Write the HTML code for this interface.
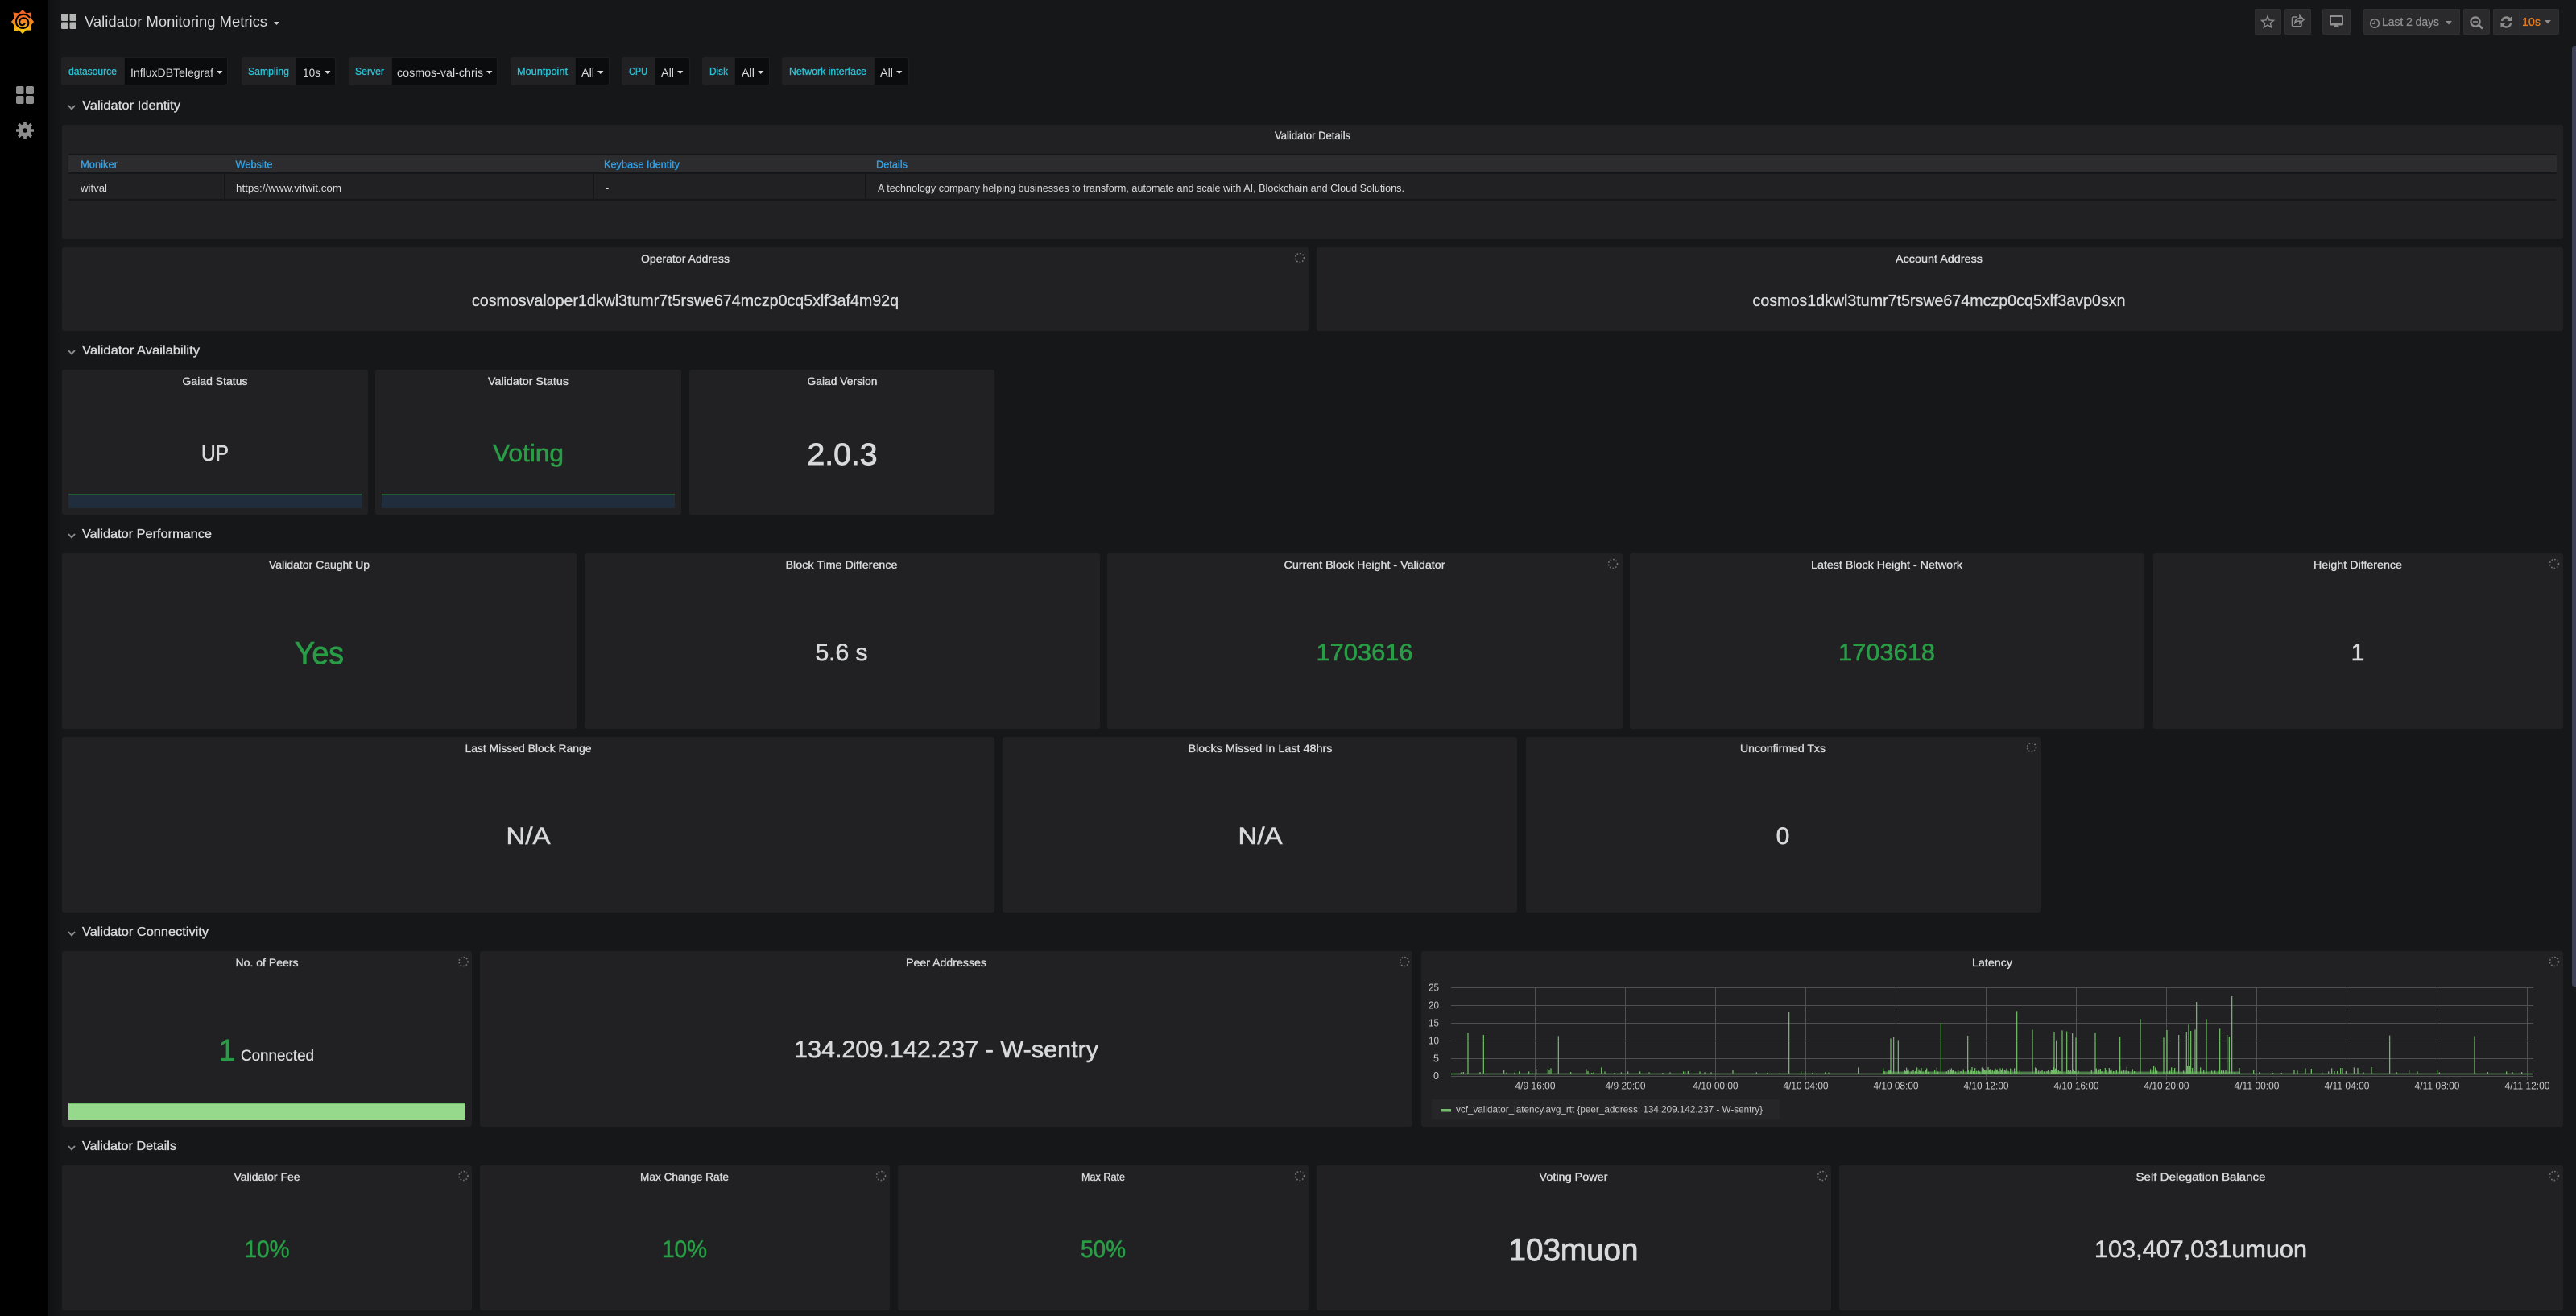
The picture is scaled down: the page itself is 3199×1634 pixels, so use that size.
<!DOCTYPE html>
<html lang="en"><head><meta charset="utf-8"><title>Validator Monitoring Metrics</title>
<style>
html,body{margin:0;padding:0;width:3199px;height:1634px;overflow:hidden;background:#161719}
.a{position:absolute}
.side{left:0;top:0;width:60px;height:1634px;background:#000}
.shade{left:60px;top:0;width:17px;height:1634px;background:linear-gradient(90deg,#101113,#161719)}
.p{position:absolute;background:#212124;border-radius:3px}
.lab{position:absolute;top:71px;height:35px;background:#212124;border-radius:3px 0 0 3px}
.val{position:absolute;top:71px;height:35px;background:#0b0c0e;border:1px solid #1c1d1f;box-sizing:border-box;border-radius:0 3px 3px 0}
.b{position:absolute;top:11px;height:32px;background:#2a2a2c;border:1px solid #2f2f32;box-sizing:border-box;border-radius:2px}
.d{position:absolute;background:#141619}
.th{position:absolute;left:85px;top:193px;width:3090px;height:21px;background:#2c2c2f}
svg{position:absolute;left:0;top:0}
text{font-family:"Liberation Sans",sans-serif}
.t{font-size:13.5px;fill:#d8d9da;stroke:#d8d9da;stroke-width:.35px;text-anchor:middle}
.s{font-size:16px;fill:#d8d9da;stroke:#d8d9da;stroke-width:.35px}
.l{font-size:12.5px;fill:#2ac1d2;stroke:#2ac1d2;stroke-width:.3px}
.v{font-size:14px;fill:#d8d9da}
.h{font-size:12.5px;fill:#33a2e5;stroke:#33a2e5;stroke-width:.3px}
.c{font-size:13px;fill:#d8d9da}
.g{fill:#299c46;stroke:#299c46;stroke-width:.6px;text-anchor:middle}
.w{fill:#d8d9da;stroke:#d8d9da;stroke-width:.6px;text-anchor:middle}
.x{font-size:12.5px;fill:#c8c8c8;text-anchor:middle}
.y{font-size:12.5px;fill:#c8c8c8;text-anchor:end}
.sp{fill:none;stroke:#777;stroke-width:1.6;stroke-dasharray:1.6 2.1}
</style></head><body>
<div class="a side"></div><div class="a shade"></div>

<div class="lab" style="left:76px;width:78px"></div><div class="val" style="left:154px;width:129px"></div>
<div class="lab" style="left:300px;width:67px"></div><div class="val" style="left:367px;width:50px"></div>
<div class="lab" style="left:433px;width:53px"></div><div class="val" style="left:486px;width:132px"></div>
<div class="lab" style="left:634px;width:80px"></div><div class="val" style="left:714px;width:43px"></div>
<div class="lab" style="left:772px;width:41px"></div><div class="val" style="left:813px;width:44px"></div>
<div class="lab" style="left:872px;width:40px"></div><div class="val" style="left:912px;width:44px"></div>
<div class="lab" style="left:971px;width:114px"></div><div class="val" style="left:1085px;width:44px"></div>

<div class="b" style="left:2800px;width:33px"></div>
<div class="b" style="left:2837px;width:33px"></div>
<div class="b" style="left:2884px;width:35px"></div>
<div class="b" style="left:2935px;width:120px"></div>
<div class="b" style="left:3059px;width:33px"></div>
<div class="b" style="left:3096px;width:33px"></div>
<div class="b" style="left:3128px;width:50px"></div>

<div class="p" style="left:77px;top:155px;width:3106px;height:142px"></div>
<div class="d" style="left:85px;top:191px;width:3090px;height:58px"></div>
<div class="th"></div>
<div class="p" style="left:85px;top:216px;width:193px;height:31px;border-radius:0"></div>
<div class="p" style="left:280px;top:216px;width:456px;height:31px;border-radius:0"></div>
<div class="p" style="left:738px;top:216px;width:336px;height:31px;border-radius:0"></div>
<div class="p" style="left:1076px;top:216px;width:2099px;height:31px;border-radius:0"></div>

<div class="p" style="left:77px;top:307px;width:1548px;height:104px"></div>
<div class="p" style="left:1635px;top:307px;width:1548px;height:104px"></div>

<div class="p" style="left:77px;top:459px;width:380px;height:180px"></div>
<div class="p" style="left:466px;top:459px;width:380px;height:180px"></div>
<div class="p" style="left:856px;top:459px;width:379px;height:180px"></div>
<div class="a" style="left:85px;top:613px;width:364px;height:18px;background:#1f2d3d;border-top:2px solid #1d5f33;box-sizing:border-box"></div>
<div class="a" style="left:474px;top:613px;width:364px;height:18px;background:#1f2d3d;border-top:2px solid #1d5f33;box-sizing:border-box"></div>

<div class="p" style="left:77px;top:687px;width:639px;height:218px"></div>
<div class="p" style="left:726px;top:687px;width:640px;height:218px"></div>
<div class="p" style="left:1375px;top:687px;width:640px;height:218px"></div>
<div class="p" style="left:2024px;top:687px;width:639px;height:218px"></div>
<div class="p" style="left:2674px;top:687px;width:509px;height:218px"></div>

<div class="p" style="left:77px;top:915px;width:1158px;height:218px"></div>
<div class="p" style="left:1245px;top:915px;width:639px;height:218px"></div>
<div class="p" style="left:1895px;top:915px;width:639px;height:218px"></div>

<div class="p" style="left:77px;top:1181px;width:509px;height:218px"></div>
<div class="a" style="left:85px;top:1369px;width:493px;height:22px;background:#96d98d;border-top:2px solid #73bf69;box-sizing:border-box"></div>
<div class="p" style="left:596px;top:1181px;width:1158px;height:218px"></div>
<div class="p" style="left:1765px;top:1181px;width:1418px;height:218px"></div>
<div class="a" style="left:1778px;top:1365px;width:432px;height:25px;background:#262628"></div>

<div class="p" style="left:77px;top:1447px;width:509px;height:180px"></div>
<div class="p" style="left:596px;top:1447px;width:509px;height:180px"></div>
<div class="p" style="left:1115px;top:1447px;width:510px;height:180px"></div>
<div class="p" style="left:1635px;top:1447px;width:639px;height:180px"></div>
<div class="p" style="left:2284px;top:1447px;width:899px;height:180px"></div>

<div class="a" style="left:3194px;top:57px;width:5px;height:1168px;background:#3e4155;border-radius:3px 0 0 3px"></div>

<svg width="3199" height="1634" viewBox="0 0 3199 1634" xmlns="http://www.w3.org/2000/svg">
<defs><linearGradient id="lg" x1="0" y1="0" x2="0" y2="1"><stop offset="0" stop-color="#ef5a29"/><stop offset=".5" stop-color="#f58a1f"/><stop offset="1" stop-color="#fbca0a"/></linearGradient></defs>

<!-- logo -->
<polygon fill="url(#lg)" points="28,12 32.4,16.4 38.6,15.4 38.6,22.6 42,27 38.6,31.4 38.6,37.6 32.4,37.6 28,42 23.6,37.6 17.4,38.6 17.4,31.4 14,27 17.4,22.6 16.4,15.4 23.6,16.4"/>
<circle cx="28" cy="27" r="11.5" fill="url(#lg)"/>
<path d="M37 22C33 15.500 21 16.500 20 26C19.500 34 28.500 37.500 33.500 33C37.500 29 34.500 21.500 28.500 22.300C24.500 23 23 27 25 30C27 32.300 30.500 31 30.800 28" fill="none" stroke="#000" stroke-width="2.100"/>

<!-- sidebar icons -->
<g fill="#8e8e8e"><rect x="20" y="107" width="9.500" height="10" rx="2"/><rect x="32" y="107" width="10" height="10" rx="2"/><rect x="20" y="119" width="9.500" height="10" rx="2"/><rect x="32" y="119" width="10" height="10" rx="2"/></g>
<g transform="translate(31 162)"><circle r="8" fill="#8e8e8e"/><circle r="2.800" fill="#000"/><g stroke="#8e8e8e" stroke-width="3.600"><path d="M0-11V-7M0 7V11M-11 0H-7M7 0H11M-7.800-7.800-5-5M5 5 7.800 7.800M-7.800 7.800-5 5M5-5 7.800-7.800"/></g></g>

<!-- top title -->
<g fill="#b4b4b4"><rect x="76" y="17" width="8.500" height="9" rx="1.500"/><rect x="86.500" y="17" width="8.500" height="9" rx="1.500"/><rect x="76" y="27.500" width="8.500" height="8.500" rx="1.500"/><rect x="86.500" y="27.500" width="8.500" height="8.500" rx="1.500"/></g>
<text x="105" y="33" font-size="18" fill="#d8d9da" textLength="227" lengthAdjust="spacingAndGlyphs">Validator Monitoring Metrics</text>
<polygon points="340,27 347,27 343.500,31" fill="#c8c8c8"/>

<!-- top right icons -->
<polygon points="2816,20 2818,25 2823.500,25.300 2819.300,28.700 2820.700,34 2816,31 2811.300,34 2812.700,28.700 2808.500,25.300 2814,25" fill="none" stroke="#8e8e8e" stroke-width="1.400"/>
<path d="M2853 21H2848.500Q2846.500 21 2846.500 23V30.800Q2846.500 32.800 2848.500 32.800H2856Q2858 32.800 2858 30.800V28M2850 28C2850.500 24 2853 22.800 2856 22.800V19.500L2861 24.300 2856 29V26C2853.500 26 2851.500 26.300 2850 28Z" fill="none" stroke="#8e8e8e" stroke-width="1.600"/>
<path d="M2894.500 19H2908.500Q2910 19 2910 20.500V30Q2910 31.500 2908.500 31.500H2904L2904.800 33.800H2898.200L2899 31.500H2894.500Q2893 31.500 2893 30V20.500Q2893 19 2894.500 19Z" fill="#8e8e8e"/><rect x="2895" y="21" width="13" height="8" fill="#2a2a2c"/>
<circle cx="2949" cy="29" r="5.300" fill="none" stroke="#8e8e8e" stroke-width="1.500"/><path d="M2949 25.800V29.300H2946" fill="none" stroke="#8e8e8e" stroke-width="1.200"/>
<text x="2958" y="32" font-size="15" fill="#8e8e8e" stroke="#8e8e8e" stroke-width=".3" textLength="71" lengthAdjust="spacingAndGlyphs">Last 2 days</text>
<polygon points="3037,26 3045,26 3041,30.500" fill="#8e8e8e"/>
<circle cx="3074" cy="27" r="5.600" fill="none" stroke="#8e8e8e" stroke-width="2.200"/><path d="M3071 27H3077" stroke="#8e8e8e" stroke-width="1.600"/><path d="M3078.500 31.500 3083 35.500" stroke="#8e8e8e" stroke-width="2.600"/>
<path d="M3107 26C3107.800 22.800 3110 21.500 3112.500 21.500C3114.500 21.500 3116 22.500 3117 23.500" fill="none" stroke="#8e8e8e" stroke-width="2.400"/><polygon points="3119,20.500 3119,26 3113.500,26" fill="#8e8e8e"/>
<path d="M3118 29C3117.200 32.200 3115 33.500 3112.500 33.500C3110.500 33.500 3109 32.500 3108 31.500" fill="none" stroke="#8e8e8e" stroke-width="2.400"/><polygon points="3105.500,34.500 3105.500,29 3111,29" fill="#8e8e8e"/>
<text x="3132" y="32" font-size="15" fill="#eb7b18" stroke="#eb7b18" stroke-width=".3" textLength="23" lengthAdjust="spacingAndGlyphs">10s</text>
<polygon points="3160,25 3168,25 3164,29.500" fill="#8e8e8e"/>

<!-- variables -->
<text class="l" x="85" y="93" textLength="60" lengthAdjust="spacingAndGlyphs">datasource</text>
<text class="v" x="162" y="95" textLength="103" lengthAdjust="spacingAndGlyphs">InfluxDBTelegraf</text><polygon points="269,88 276.500,88 272.700,92" fill="#d8d9da"/>
<text class="l" x="308" y="93" textLength="51" lengthAdjust="spacingAndGlyphs">Sampling</text>
<text class="v" x="376" y="95" textLength="22" lengthAdjust="spacingAndGlyphs">10s</text><polygon points="403,88 410.500,88 406.700,92" fill="#d8d9da"/>
<text class="l" x="441" y="93" textLength="36" lengthAdjust="spacingAndGlyphs">Server</text>
<text class="v" x="493" y="95" textLength="107" lengthAdjust="spacingAndGlyphs">cosmos-val-chris</text><polygon points="604,88 611.500,88 607.700,92" fill="#d8d9da"/>
<text class="l" x="642" y="93" textLength="63" lengthAdjust="spacingAndGlyphs">Mountpoint</text>
<text class="v" x="722" y="95" textLength="16" lengthAdjust="spacingAndGlyphs">All</text><polygon points="742,88 749.500,88 745.700,92" fill="#d8d9da"/>
<text class="l" x="781" y="93" textLength="23" lengthAdjust="spacingAndGlyphs">CPU</text>
<text class="v" x="821" y="95" textLength="16" lengthAdjust="spacingAndGlyphs">All</text><polygon points="841,88 848.500,88 844.700,92" fill="#d8d9da"/>
<text class="l" x="881" y="93" textLength="23" lengthAdjust="spacingAndGlyphs">Disk</text>
<text class="v" x="921" y="95" textLength="16" lengthAdjust="spacingAndGlyphs">All</text><polygon points="941,88 948.500,88 944.700,92" fill="#d8d9da"/>
<text class="l" x="980" y="93" textLength="96" lengthAdjust="spacingAndGlyphs">Network interface</text>
<text class="v" x="1093" y="95" textLength="16" lengthAdjust="spacingAndGlyphs">All</text><polygon points="1113,88 1120.500,88 1116.700,92" fill="#d8d9da"/>

<!-- section titles -->
<g fill="none" stroke="#8e8e8e" stroke-width="1.800">
<path d="M85 131 89 135.500 93 131"/><path d="M85 435 89 439.500 93 435"/><path d="M85 663 89 667.500 93 663"/><path d="M85 1157 89 1161.500 93 1157"/><path d="M85 1423 89 1427.500 93 1423"/></g>
<text class="s" x="102" y="136" textLength="122" lengthAdjust="spacingAndGlyphs">Validator Identity</text>
<text class="s" x="102" y="440" textLength="146" lengthAdjust="spacingAndGlyphs">Validator Availability</text>
<text class="s" x="102" y="668" textLength="161" lengthAdjust="spacingAndGlyphs">Validator Performance</text>
<text class="s" x="102" y="1162" textLength="157" lengthAdjust="spacingAndGlyphs">Validator Connectivity</text>
<text class="s" x="102" y="1428" textLength="117" lengthAdjust="spacingAndGlyphs">Validator Details</text>

<!-- table -->
<text class="t" x="1630" y="173" textLength="94" lengthAdjust="spacingAndGlyphs">Validator Details</text>
<text class="h" x="100" y="208.500" textLength="46" lengthAdjust="spacingAndGlyphs">Moniker</text>
<text class="h" x="292.500" y="208.500" textLength="46" lengthAdjust="spacingAndGlyphs">Website</text>
<text class="h" x="750" y="208.500" textLength="94" lengthAdjust="spacingAndGlyphs">Keybase Identity</text>
<text class="h" x="1088" y="208.500" textLength="39" lengthAdjust="spacingAndGlyphs">Details</text>
<text class="c" x="100" y="238" textLength="33" lengthAdjust="spacingAndGlyphs">witval</text>
<text class="c" x="293" y="238" textLength="131" lengthAdjust="spacingAndGlyphs">https://www.vitwit.com</text>
<text class="c" x="752" y="238">-</text>
<text class="c" x="1090" y="238" textLength="654" lengthAdjust="spacingAndGlyphs">A technology company helping businesses to transform, automate and scale with AI, Blockchain and Cloud Solutions.</text>

<!-- address -->
<text class="t" x="851" y="326" textLength="110" lengthAdjust="spacingAndGlyphs">Operator Address</text>
<text class="t" x="2408" y="326" textLength="108" lengthAdjust="spacingAndGlyphs">Account Address</text>
<text class="w" x="851" y="380" font-size="20" textLength="530" lengthAdjust="spacingAndGlyphs" style="stroke-width:.35px">cosmosvaloper1dkwl3tumr7t5rswe674mczp0cq5xlf3af4m92q</text>
<text class="w" x="2408" y="380" font-size="20" textLength="463" lengthAdjust="spacingAndGlyphs" style="stroke-width:.35px">cosmos1dkwl3tumr7t5rswe674mczp0cq5xlf3avp0sxn</text>

<!-- availability -->
<text class="t" x="267" y="478" textLength="81" lengthAdjust="spacingAndGlyphs">Gaiad Status</text>
<text class="t" x="656" y="478" textLength="100" lengthAdjust="spacingAndGlyphs">Validator Status</text>
<text class="t" x="1046" y="478" textLength="87" lengthAdjust="spacingAndGlyphs">Gaiad Version</text>
<text class="w" x="267" y="572" font-size="28" textLength="34" lengthAdjust="spacingAndGlyphs">UP</text>
<text class="g" x="656" y="573" font-size="31" textLength="88" lengthAdjust="spacingAndGlyphs">Voting</text>
<text class="w" x="1046" y="577" font-size="38" textLength="87" lengthAdjust="spacingAndGlyphs" style="stroke-width:.9px">2.0.3</text>

<!-- performance -->
<text class="t" x="396.500" y="706" textLength="125" lengthAdjust="spacingAndGlyphs">Validator Caught Up</text>
<text class="t" x="1045" y="706" textLength="139" lengthAdjust="spacingAndGlyphs">Block Time Difference</text>
<text class="t" x="1694.500" y="706" textLength="200" lengthAdjust="spacingAndGlyphs">Current Block Height - Validator</text>
<text class="t" x="2343" y="706" textLength="188" lengthAdjust="spacingAndGlyphs">Latest Block Height - Network</text>
<text class="t" x="2928" y="706" textLength="110" lengthAdjust="spacingAndGlyphs">Height Difference</text>
<text class="g" x="396.500" y="824" font-size="39" textLength="61" lengthAdjust="spacingAndGlyphs" style="stroke-width:.9px">Yes</text>
<text class="w" x="1045" y="820" font-size="30" textLength="65" lengthAdjust="spacingAndGlyphs">5.6 s</text>
<text class="g" x="1694.500" y="820" font-size="30" textLength="120" lengthAdjust="spacingAndGlyphs">1703616</text>
<text class="g" x="2343" y="820" font-size="30" textLength="120" lengthAdjust="spacingAndGlyphs">1703618</text>
<text class="w" x="2928" y="820" font-size="30">1</text>

<text class="t" x="656" y="934" textLength="157" lengthAdjust="spacingAndGlyphs">Last Missed Block Range</text>
<text class="t" x="1565" y="934" textLength="179" lengthAdjust="spacingAndGlyphs">Blocks Missed In Last 48hrs</text>
<text class="t" x="2214" y="934" textLength="106" lengthAdjust="spacingAndGlyphs">Unconfirmed Txs</text>
<text class="w" x="656" y="1048" font-size="30" textLength="55" lengthAdjust="spacingAndGlyphs">N/A</text>
<text class="w" x="1565" y="1048" font-size="30" textLength="55" lengthAdjust="spacingAndGlyphs">N/A</text>
<text class="w" x="2214" y="1048" font-size="30">0</text>

<!-- connectivity -->
<text class="t" x="331.500" y="1200" textLength="78" lengthAdjust="spacingAndGlyphs">No. of Peers</text>
<text class="t" x="1175" y="1200" textLength="100" lengthAdjust="spacingAndGlyphs">Peer Addresses</text>
<text class="t" x="2474" y="1200" textLength="50" lengthAdjust="spacingAndGlyphs">Latency</text>
<text x="282" y="1317" font-size="38" fill="#299c46" stroke="#299c46" stroke-width=".5" text-anchor="middle">1</text>
<text x="299" y="1317" font-size="19.500" fill="#d8d9da" stroke="#d8d9da" stroke-width=".35" textLength="91" lengthAdjust="spacingAndGlyphs">Connected</text>
<text class="w" x="1175" y="1313" font-size="30" textLength="378" lengthAdjust="spacingAndGlyphs">134.209.142.237 - W-sentry</text>

<!-- chart grid -->
<g stroke="#505052" stroke-width="1" fill="none">
<path d="M1802 1226.500H3146M1802 1248.500H3146M1802 1270.500H3146M1802 1292.500H3146M1802 1314.500H3146M1802 1336.500H3146"/>
<path d="M1906.500 1226V1341M2018.500 1226V1341M2130.500 1226V1341M2242.500 1226V1341M2354.500 1226V1341M2466.500 1226V1341M2578.500 1226V1341M2690.500 1226V1341M2802.500 1226V1341M2914.500 1226V1341M3026.500 1226V1341M3138.500 1226V1341"/>
</g>
<g class="axis">
<text class="y" x="1787" y="1230.500" textLength="13" lengthAdjust="spacingAndGlyphs">25</text>
<text class="y" x="1787" y="1252.500" textLength="13" lengthAdjust="spacingAndGlyphs">20</text>
<text class="y" x="1787" y="1274.500" textLength="13" lengthAdjust="spacingAndGlyphs">15</text>
<text class="y" x="1787" y="1296.500" textLength="13" lengthAdjust="spacingAndGlyphs">10</text>
<text class="y" x="1787" y="1318.500" textLength="7" lengthAdjust="spacingAndGlyphs">5</text>
<text class="y" x="1787" y="1340" textLength="7" lengthAdjust="spacingAndGlyphs">0</text>
<text class="x" x="1906.500" y="1352.500" textLength="50" lengthAdjust="spacingAndGlyphs">4/9 16:00</text>
<text class="x" x="2018.500" y="1352.500" textLength="50" lengthAdjust="spacingAndGlyphs">4/9 20:00</text>
<text class="x" x="2130.500" y="1352.500" textLength="56" lengthAdjust="spacingAndGlyphs">4/10 00:00</text>
<text class="x" x="2242.500" y="1352.500" textLength="56" lengthAdjust="spacingAndGlyphs">4/10 04:00</text>
<text class="x" x="2354.500" y="1352.500" textLength="56" lengthAdjust="spacingAndGlyphs">4/10 08:00</text>
<text class="x" x="2466.500" y="1352.500" textLength="56" lengthAdjust="spacingAndGlyphs">4/10 12:00</text>
<text class="x" x="2578.500" y="1352.500" textLength="56" lengthAdjust="spacingAndGlyphs">4/10 16:00</text>
<text class="x" x="2690.500" y="1352.500" textLength="56" lengthAdjust="spacingAndGlyphs">4/10 20:00</text>
<text class="x" x="2802.500" y="1352.500" textLength="56" lengthAdjust="spacingAndGlyphs">4/11 00:00</text>
<text class="x" x="2914.500" y="1352.500" textLength="56" lengthAdjust="spacingAndGlyphs">4/11 04:00</text>
<text class="x" x="3026.500" y="1352.500" textLength="56" lengthAdjust="spacingAndGlyphs">4/11 08:00</text>
<text class="x" x="3138.500" y="1352.500" textLength="56" lengthAdjust="spacingAndGlyphs">4/11 12:00</text>
</g>

<!-- chart data -->
<rect x="2340" y="1330.500" width="442" height="3" fill="#73bf69" opacity=".55"/>
<path d="M1802 1333.500H3146" stroke="#73bf69" stroke-width="1.600"/>
<g stroke="#73bf69" stroke-width="1.200" fill="none">
<g transform="translate(1760 1200) scale(.33333)" stroke-width="3.600">
<path d="M189 400V247M247 400V255M526 400V259M1385 400V168M163 400V395M172 400V393M234 400V393M323 400V385M333 400V395M363 400V395M380 400V391M416 400V391M428 400V396M443 400V381M487 400V381M492 400V387M498 400V379M572 400V393M630 400V382M636 400V390M650 400V396M657 400V394M686 400V376M699 400V391M735 400V396M760 400V394M785 400V391M830 400V391M864 400V394M915 400V396M942 400V394M992 400V391M998 400V391M1009 400V390M1053 400V391M1071 400V394M1095 400V394M1176 400V385M1264 400V394M1304 400V396M1350 400V397M1430 400V391M1445 400V391M1472 400V396"/>
</g>
<g transform="translate(2260 1200) scale(.33333)" stroke-width="3.600">
<path d="M264 400V268M275 400V264M292 400V274M451 400V211M551 400V258M734 400V166M792 400V236M873 400V243M881 400V275M903 400V238M920 400V242M941 400V249M954 400V265M1026 400V247M1118 400V262M1194 400V196M1281 400V265M1293 400V237"/>
<path d="M20 400V394M33 400V395M143 400V376M236 400V379M254 400V386M262 400V384M316 400V384M323 400V377M330 400V383M348 400V385M362 400V376M369 400V383M378 400V378M395 400V385M398 400V379M428 400V384M436 400V376M478 400V387M484 400V380M490 400V379M497 400V385M515 400V386M535 400V383M553 400V386M560 400V382M567 400V375M578 400V378M590 400V388M604 400V376M610 400V380M618 400V385M627 400V375M634 400V382M643 400V384M654 400V380M661 400V383M672 400V379M680 400V379M688 400V384M696 400V380M710 400V380M725 400V379M745 400V388M803 400V376M808 400V379M815 400V388M828 400V386M851 400V385M862 400V384M870 400V375M878 400V380M889 400V385M925 400V387M934 400V385M945 400V383M963 400V389M1012 400V385M1030 400V380M1040 400V383M1045 400V381M1063 400V378M1078 400V378M1086 400V383M1105 400V385M1118 400V373M1133 400V385M1144 400V374M1165 400V382M1232 400V382M1244 400V370M1250 400V376M1310 400V376"/>
<path d="M240 400V390M258 400V388M320 400V390M326 400V388M340 400V391M356 400V390M373 400V389M384 400V391M392 400V389M404 400V392M440 400V391M472 400V391M487 400V386M494 400V388M505 400V391M525 400V390M544 400V391M564 400V388M572 400V390M584 400V389M596 400V391M607 400V385M614 400V387M622 400V388M631 400V386M638 400V388M649 400V389M658 400V387M666 400V390M676 400V387M692 400V388M702 400V389M716 400V388M730 400V390M806 400V386M822 400V390M836 400V391M846 400V390M866 400V387M874 400V385M884 400V389M894 400V390M930 400V391M940 400V389M950 400V390M1036 400V388M1050 400V390M1068 400V387M1082 400V388M1094 400V390M1124 400V389M1140 400V388M1150 400V390M1172 400V390M1238 400V386M1256 400V388M1304 400V388M1316 400V386"/>
</g>
<g transform="translate(2700 1200) scale(.33333)" stroke-width="3.600">
<path d="M17 400V255M46 400V243M54 400V217M62 400V240M78 400V235M83 400V132M120 400V196M170 400V232M197 400V255M205 400V262M215 400V111M803 400V257M1119 400V259"/>
<path d="M2 400V378M35 400V388M50 400V370M58 400V370M68 400V378M98 400V376M110 400V385M140 400V388M152 400V388M164 400V384M176 400V386M184 400V386M192 400V384M225 400V394M243 400V378M296 400V387M317 400V394M368 400V396M400 400V396M447 400V385M459 400V388M489 400V379M511 400V381M551 400V394M575 400V391M587 400V379M597 400V390M608 400V390M620 400V378M627 400V378M640 400V390M670 400V376M684 400V378M705 400V394M735 400V375M829 400V394M875 400V384M906 400V391M980 400V387M988 400V394M1168 400V393M1238 400V391M1260 400V393M1295 400V393"/>
</g>
</g>

<!-- legend -->
<rect x="1789" y="1377" width="13" height="3.500" fill="#73bf69"/>
<text x="1808" y="1381.500" font-size="12" fill="#c8c8c8" textLength="381" lengthAdjust="spacingAndGlyphs">vcf_validator_latency.avg_rtt {peer_address: 134.209.142.237 - W-sentry}</text>

<!-- details -->
<text class="t" x="331.500" y="1466" textLength="82" lengthAdjust="spacingAndGlyphs">Validator Fee</text>
<text class="t" x="850" y="1466" textLength="110" lengthAdjust="spacingAndGlyphs">Max Change Rate</text>
<text class="t" x="1370" y="1466" textLength="54" lengthAdjust="spacingAndGlyphs">Max Rate</text>
<text class="t" x="1954" y="1466" textLength="85" lengthAdjust="spacingAndGlyphs">Voting Power</text>
<text class="t" x="2733" y="1466" textLength="161" lengthAdjust="spacingAndGlyphs">Self Delegation Balance</text>
<text class="g" x="331.500" y="1561" font-size="30" textLength="56" lengthAdjust="spacingAndGlyphs">10%</text>
<text class="g" x="850" y="1561" font-size="30" textLength="56" lengthAdjust="spacingAndGlyphs">10%</text>
<text class="g" x="1370" y="1561" font-size="30" textLength="56" lengthAdjust="spacingAndGlyphs">50%</text>
<text class="w" x="1954" y="1565" font-size="39" textLength="161" lengthAdjust="spacingAndGlyphs" style="stroke-width:.9px">103muon</text>
<text class="w" x="2733" y="1561" font-size="30" textLength="264" lengthAdjust="spacingAndGlyphs">103,407,031umuon</text>

<!-- spinners -->
<circle class="sp" cx="1614" cy="320" r="5.500"/>
<circle class="sp" cx="2003" cy="700" r="5.500"/>
<circle class="sp" cx="3172" cy="700" r="5.500"/>
<circle class="sp" cx="2523" cy="928" r="5.500"/>
<circle class="sp" cx="575.500" cy="1194" r="5.500"/>
<circle class="sp" cx="1744" cy="1194" r="5.500"/>
<circle class="sp" cx="3172" cy="1194" r="5.500"/>
<circle class="sp" cx="575.500" cy="1460" r="5.500"/>
<circle class="sp" cx="1094" cy="1460" r="5.500"/>
<circle class="sp" cx="1614" cy="1460" r="5.500"/>
<circle class="sp" cx="2263" cy="1460" r="5.500"/>
<circle class="sp" cx="3172" cy="1460" r="5.500"/>
</svg>
</body></html>
